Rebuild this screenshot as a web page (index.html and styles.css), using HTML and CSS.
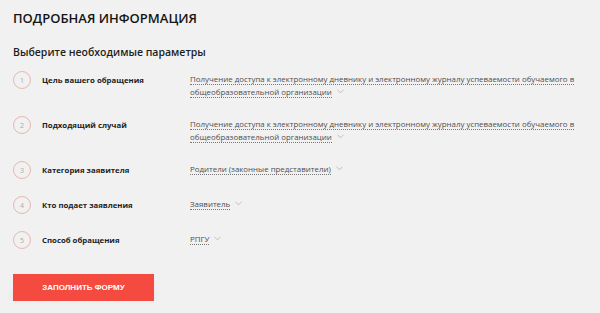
FILE: index.html
```html
<!DOCTYPE html>
<html lang="ru">
<head>
    <meta charset="UTF-8">
    <meta name="viewport" content="width=device-width, initial-scale=1.0">
    <title>Подробная информация</title>
    <link rel="stylesheet" href="styles.css">
</head>
<body>
    <div class="container">
        <h1>Подробная информация</h1>
        <h2>Выберите необходимые параметры</h2>

        <div class="params">
            <div class="row">
                <span class="num">1</span>
                <span class="label">Цель вашего обращения</span>
                <div class="value"><span class="link">Получение доступа к электронному дневнику и электронному журналу успеваемости обучаемого в общеобразовательной организации</span><svg class="chev" viewBox="0 0 8 5"><path d="M0.5 0.5 L4 4 L7.5 0.5"/></svg></div>
            </div>
            <div class="row">
                <span class="num">2</span>
                <span class="label">Подходящий случай</span>
                <div class="value"><span class="link">Получение доступа к электронному дневнику и электронному журналу успеваемости обучаемого в общеобразовательной организации</span><svg class="chev" viewBox="0 0 8 5"><path d="M0.5 0.5 L4 4 L7.5 0.5"/></svg></div>
            </div>
            <div class="row">
                <span class="num">3</span>
                <span class="label">Категория заявителя</span>
                <div class="value"><span class="link">Родители (законные представители)</span><svg class="chev" viewBox="0 0 8 5"><path d="M0.5 0.5 L4 4 L7.5 0.5"/></svg></div>
            </div>
            <div class="row">
                <span class="num">4</span>
                <span class="label">Кто подает заявления</span>
                <div class="value"><span class="link">Заявитель</span><svg class="chev" viewBox="0 0 8 5"><path d="M0.5 0.5 L4 4 L7.5 0.5"/></svg></div>
            </div>
            <div class="row">
                <span class="num">5</span>
                <span class="label">Способ обращения</span>
                <div class="value"><span class="link">РПГУ</span><svg class="chev" viewBox="0 0 8 5"><path d="M0.5 0.5 L4 4 L7.5 0.5"/></svg></div>
            </div>
        </div>

        <button class="btn">Заполнить форму</button>
    </div>
</body>
</html>
```

FILE: styles.css
```css
body {
    font-family: "Open Sans", Arial, sans-serif;
    background-color: #f1f1f1;
    color: #222;
    margin: 0;
    padding: 0;
}

.container {
    padding: 8px 13px 0 13px;
}

h1 {
    font-size: 13px;
    line-height: 20px;
    font-weight: 600;
    text-transform: uppercase;
    margin: 0 0 16px 0;
    color: #151515;
}

h2 {
    font-size: 10.5px;
    line-height: 16px;
    font-weight: 600;
    margin: 0 0 11px 0;
    color: #1e1e1e;
}

.params {
    display: flex;
    flex-direction: column;
    gap: 17px;
}

.row {
    display: grid;
    grid-template-columns: 18px 159px 400px;
    align-items: start;
}

.num {
    width: 16px;
    height: 16px;
    border: 1px solid #e6b7b1;
    border-radius: 50%;
    display: flex;
    align-items: center;
    justify-content: center;
    font-size: 7px;
    color: #b0a8a6;
}

.label {
    font-size: 7.8px;
    font-weight: 700;
    line-height: 18px;
    padding-left: 11px;
    color: #1e1e1e;
}

.value {
    font-size: 7.9px;
    line-height: 13px;
    padding-top: 2px;
    color: #4e4e4e;
}

.link {
    border-bottom: 1px dotted #777;
}

.chev {
    width: 7px;
    height: 5px;
    margin-left: 5px;
    vertical-align: 1px;
    fill: none;
    stroke: #aaa;
    stroke-width: 0.8;
}

.btn {
    display: block;
    margin-top: 25px;
    width: 141px;
    height: 27px;
    background-color: #f44a3f;
    color: #fff;
    border: none;
    font-family: Arial, "Liberation Sans", sans-serif;
    font-weight: 700;
    font-size: 8px;
    text-transform: uppercase;
    box-shadow: 0 10px 12px -6px rgba(0, 0, 0, 0.25);
    cursor: pointer;
    padding: 0;
}
```
